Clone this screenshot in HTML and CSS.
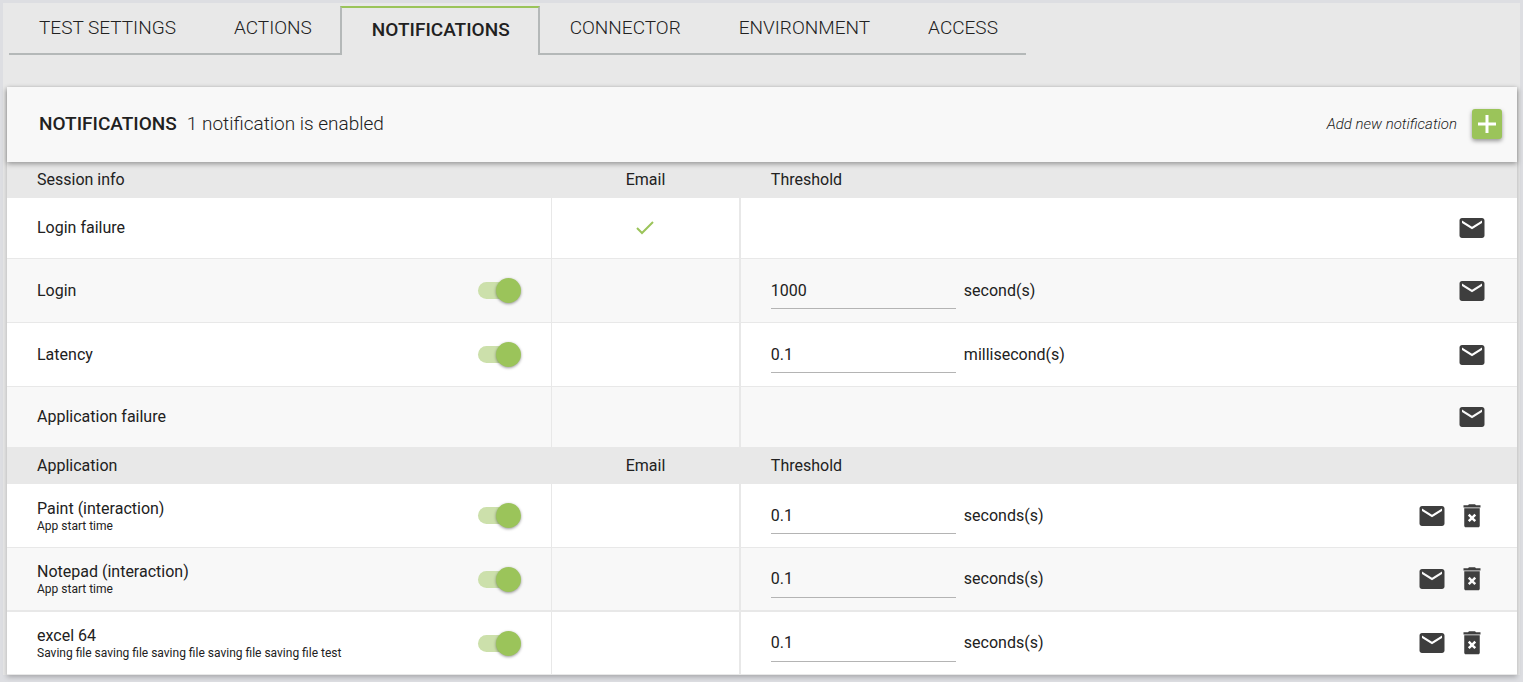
FILE: index.html
```html
<!DOCTYPE html>
<html lang="en">
  <head>
    <meta charset="UTF-8">
    <meta name="viewport" content="width=device-width, initial-scale=1">
    <title>Notifications</title>
    <link rel="stylesheet" href="styles.css">
  </head>
  <body>
    <svg class="sprite" aria-hidden="true">
      <symbol id="icon-mail" viewBox="0 0 24 24">
        <path d="M20 4H4c-1.1 0-1.99.9-1.99 2L2 18c0 1.1.9 2 2 2h16c1.1 0 2-.9 2-2V6c0-1.1-.9-2-2-2zm0 4l-8 5-8-5V6l8 5 8-5v2z"/>
      </symbol>
      <symbol id="icon-delete" viewBox="0 0 24 24">
        <path fill-rule="evenodd" d="M5.2 3.4h3.6l.8-.8h4.8l.8.8h3.6v1.7H5.2zM5.8 5.7h12.4v14.1c0 .7-.5 1.2-1.2 1.2H7c-.7 0-1.2-.5-1.2-1.2zM10.1 10.2L8.7 11.6l1.9 1.9-1.9 1.9 1.4 1.4 1.9-1.9 1.9 1.9 1.4-1.4-1.9-1.9 1.9-1.9-1.4-1.4-1.9 1.9z"/>
      </symbol>
    </svg>

    <div class="page">
      <nav class="tabs">
        <a href="#" class="tab">TEST SETTINGS</a>
        <a href="#" class="tab">ACTIONS</a>
        <a href="#" class="tab active" aria-current="page">NOTIFICATIONS</a>
        <a href="#" class="tab">CONNECTOR</a>
        <a href="#" class="tab">ENVIRONMENT</a>
        <a href="#" class="tab">ACCESS</a>
      </nav>

      <div class="card">
        <div class="card-header">
          <h2>NOTIFICATIONS</h2>
          <span class="summary">1 notification is enabled</span>
          <label class="add-label" for="add">Add new notification</label>
          <button type="button" class="add-button" id="add">
            <svg viewBox="0 0 30 30"><path d="M6 15h18M15 6v18"/></svg>
          </button>
        </div>

        <table class="list">
          <colgroup>
            <col class="col-name">
            <col class="col-email">
            <col class="col-threshold">
            <col class="col-actions">
          </colgroup>
          <tbody>
            <tr class="head">
              <th>Session info</th>
              <th class="email">Email</th>
              <th>Threshold</th>
              <th></th>
            </tr>
            <tr class="plain">
              <td>Login failure</td>
              <td class="email"><svg class="check" viewBox="0 0 18 14"><path d="M1 7l5 5L17 1"/></svg></td>
              <td></td>
              <td><div class="actions"><button type="button" aria-label="Email"><svg><use href="#icon-mail"/></svg></button></div></td>
            </tr>
            <tr>
              <td><label class="name"><span>Login</span><input type="checkbox" class="toggle" checked></label></td>
              <td class="email"></td>
              <td><label class="threshold"><input type="text" value="1000"><span>second(s)</span></label></td>
              <td><div class="actions"><button type="button" aria-label="Email"><svg><use href="#icon-mail"/></svg></button></div></td>
            </tr>
            <tr>
              <td><label class="name"><span>Latency</span><input type="checkbox" class="toggle" checked></label></td>
              <td class="email"></td>
              <td><label class="threshold"><input type="text" value="0.1"><span>millisecond(s)</span></label></td>
              <td><div class="actions"><button type="button" aria-label="Email"><svg><use href="#icon-mail"/></svg></button></div></td>
            </tr>
            <tr class="plain">
              <td>Application failure</td>
              <td class="email"></td>
              <td></td>
              <td><div class="actions"><button type="button" aria-label="Email"><svg><use href="#icon-mail"/></svg></button></div></td>
            </tr>
          </tbody>
          <tbody>
            <tr class="head">
              <th>Application</th>
              <th class="email">Email</th>
              <th>Threshold</th>
              <th></th>
            </tr>
            <tr>
              <td><label class="name"><span>Paint (interaction)<small>App start time</small></span><input type="checkbox" class="toggle" checked></label></td>
              <td class="email"></td>
              <td><label class="threshold"><input type="text" value="0.1"><span>seconds(s)</span></label></td>
              <td>
                <div class="actions">
                  <button type="button" aria-label="Email"><svg><use href="#icon-mail"/></svg></button>
                  <button type="button" aria-label="Delete"><svg><use href="#icon-delete"/></svg></button>
                </div>
              </td>
            </tr>
            <tr class="divided">
              <td><label class="name"><span>Notepad (interaction)<small>App start time</small></span><input type="checkbox" class="toggle" checked></label></td>
              <td class="email"></td>
              <td><label class="threshold"><input type="text" value="0.1"><span>seconds(s)</span></label></td>
              <td>
                <div class="actions">
                  <button type="button" aria-label="Email"><svg><use href="#icon-mail"/></svg></button>
                  <button type="button" aria-label="Delete"><svg><use href="#icon-delete"/></svg></button>
                </div>
              </td>
            </tr>
            <tr class="last">
              <td><label class="name"><span>excel 64<small>Saving file saving file saving file saving file saving file test</small></span><input type="checkbox" class="toggle" checked></label></td>
              <td class="email"></td>
              <td><label class="threshold"><input type="text" value="0.1"><span>seconds(s)</span></label></td>
              <td>
                <div class="actions">
                  <button type="button" aria-label="Email"><svg><use href="#icon-mail"/></svg></button>
                  <button type="button" aria-label="Delete"><svg><use href="#icon-delete"/></svg></button>
                </div>
              </td>
            </tr>
          </tbody>
        </table>
      </div>
    </div>
  </body>
</html>
```

FILE: styles.css
```css
* {
  box-sizing: border-box;
}
body {
  margin: 0;
  padding: 3px 3px 8px;
  background: #dddee2;
  color: #212121;
  font-family: Roboto, 'Liberation Sans', sans-serif;
  font-size: 16px;
  line-height: 20px;
}
.sprite {
  display: none;
}
button {
  padding: 0;
  border: none;
  background: none;
  cursor: pointer;
}
.page {
  padding: 3px 3px 0 4px;
  background: #e8e8e8;
}

/* tabs */
.tabs {
  display: flex;
  width: fit-content;
  height: 49px;
  margin: 0 2px 32px;
}
.tab {
  padding: 10px 28px 0 30px;
  border-bottom: 2px solid #b4b8b8;
  color: #212121;
  font-size: 19px;
  font-weight: 300;
  line-height: 24px;
  text-decoration: none;
}
.tab.active {
  border: 2px solid #b4b8b8;
  border-top-color: #9bc45a;
  border-bottom: none;
  font-weight: 500;
}

/* card */
.card {
  background: #fff;
  box-shadow: 0 2px 5px rgba(0,0,0,0.25);
}
.card-header {
  position: relative;
  display: flex;
  align-items: center;
  height: 75px;
  padding: 0 15px 1px 32px;
  background: #f8f8f8;
  box-shadow: 0 2px 5px rgba(0,0,0,0.35);
}
.card-header h2 {
  margin: 0 10px 0 0;
  font-size: 19px;
  font-weight: 500;
  line-height: 22px;
}
.summary {
  font-size: 19px;
  font-weight: 300;
  line-height: 22px;
}
.add-label {
  margin: 0 15px 0 auto;
  font-size: 15px;
  font-style: italic;
  font-weight: 300;
}
.add-button {
  width: 30px;
  height: 30px;
  border-radius: 3px;
  background: #9bc45a;
  box-shadow: 0 2px 4px rgba(0,0,0,0.4);
}
.add-button svg {
  display: block;
  fill: none;
  stroke: #fff;
  stroke-width: 3;
}

/* list */
.list {
  width: 100%;
  table-layout: fixed;
  border-collapse: separate;
  border-spacing: 0;
}
.col-name {
  width: 36.1%;
}
.col-email {
  width: 12.5%;
}
.col-actions {
  width: 120px;
}
th,
td {
  height: 64px;
  padding: 0 30px;
  border-bottom: 1px solid #e8e8e8;
  text-align: left;
  font-weight: 400;
}
.head th {
  height: 36px;
  background: #e8e8e8;
}
.plain td {
  height: 61px;
}
.divided td {
  border-bottom-width: 2px;
}
.last td {
  height: 63px;
}
tr:nth-child(odd) td {
  background: #f8f8f8;
}
.last:nth-child(even) td {
  background: #fff;
}
td:first-child {
  border-right: 1px solid #e8e8e8;
}
.email {
  border-right: 2px solid #e8e8e8;
  text-align: center;
}
td:last-child {
  padding: 0;
}
.check {
  display: block;
  width: 18px;
  height: 14px;
  margin: auto;
  fill: none;
  stroke: #9bc45a;
  stroke-width: 2;
}
.name {
  display: flex;
  align-items: center;
  justify-content: space-between;
}
.name small {
  display: block;
  font-size: 12px;
  line-height: 14px;
}
.toggle {
  appearance: none;
  position: relative;
  width: 36px;
  height: 17px;
  margin: 0 7px 0 0;
  border-radius: 9px;
  background: #cce0ab;
  cursor: pointer;
}
.toggle::after {
  content: '';
  position: absolute;
  top: -4px;
  right: -7px;
  width: 25px;
  height: 25px;
  border-radius: 50%;
  background: #9bc45a;
  box-shadow: 0 1px 3px rgba(0,0,0,0.4);
}
.threshold {
  display: flex;
  align-items: center;
  gap: 8px;
}
.threshold input {
  width: 185px;
  height: 37px;
  padding: 0;
  border: none;
  border-bottom: 1px solid #b4b4b4;
  background: none;
  color: inherit;
  font: inherit;
  outline: none;
}
.actions {
  display: flex;
  justify-content: flex-end;
  gap: 10px;
  padding-right: 30px;
}
.actions svg {
  display: block;
  width: 30px;
  height: 30px;
  fill: #3e3e3e;
}
```
